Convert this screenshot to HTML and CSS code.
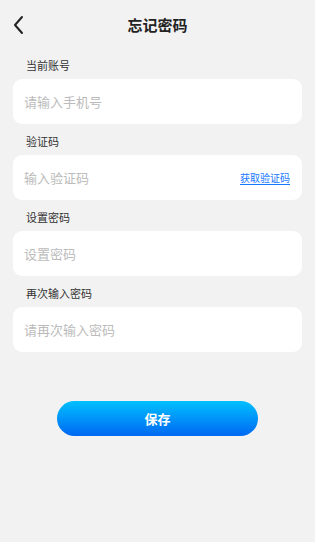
FILE: index.html
```html
<!DOCTYPE html>
<html>
  <head>
    <title>忘记密码</title>
    <meta charset="UTF-8">
    <link rel="stylesheet" href="styles.css">
  </head>
  <body>
    <div class="header">
      <svg class="back" width="24" height="24" viewBox="0 0 24 24">
        <polyline points="15,4 8,12 15,20" fill="none" stroke="#222" stroke-width="2" stroke-linecap="round" stroke-linejoin="round"/>
      </svg>
      <div class="title">忘记密码</div>
    </div>
    <div class="form">
      <div class="field">
        <div class="label">当前账号</div>
        <div class="card"><input class="input" placeholder="请输入手机号"></div>
      </div>
      <div class="field">
        <div class="label">验证码</div>
        <div class="card">
          <input class="input" placeholder="输入验证码">
          <span class="code-btn">获取验证码</span>
        </div>
      </div>
      <div class="field">
        <div class="label">设置密码</div>
        <div class="card"><input class="input" type="password" placeholder="设置密码"></div>
      </div>
      <div class="field">
        <div class="label">再次输入密码</div>
        <div class="card"><input class="input" type="password" placeholder="请再次输入密码"></div>
      </div>
    </div>
    <div class="actions">
      <button class="save">保存</button>
    </div>
  </body>
</html>
```

FILE: styles.css
```css
body {
  margin: 0;
  padding: 0;
  background-color: #f2f2f2;
  font-family: "Noto Sans CJK SC", "Noto Sans", sans-serif;
  color: #222;
}

.header {
  position: relative;
  height: 48px;
  display: flex;
  align-items: center;
  justify-content: center;
}

.header .back {
  position: absolute;
  left: 7px;
  top: 13px;
}

.title {
  font-size: 15px;
  font-weight: bold;
  color: #222;
}

.form {
  padding: 0 13px;
}

.label {
  padding: 9px 0 6px 13px;
  font-size: 11px;
  line-height: 16px;
  color: #333;
}

.card {
  height: 45px;
  background-color: #fff;
  border-radius: 9px;
  display: flex;
  align-items: center;
  padding: 0 11px;
}

.input {
  flex: 1;
  min-width: 0;
  border: none;
  outline: none;
  background: transparent;
  font-family: inherit;
  font-size: 13px;
  color: #333;
  padding: 0;
}

.input::placeholder {
  color: #bbb;
}

.code-btn {
  font-size: 10px;
  color: #1677ff;
  border-bottom: 1px solid #1677ff;
  line-height: 13px;
  margin-right: 1px;
}

.actions {
  display: flex;
  justify-content: center;
  padding-top: 49px;
}

.save {
  width: 201px;
  height: 35px;
  border: none;
  border-radius: 18px;
  background: linear-gradient(180deg, #00c0ff 0%, #0068f2 100%);
  color: #fff;
  font-family: inherit;
  font-size: 13px;
  font-weight: bold;
}
```
